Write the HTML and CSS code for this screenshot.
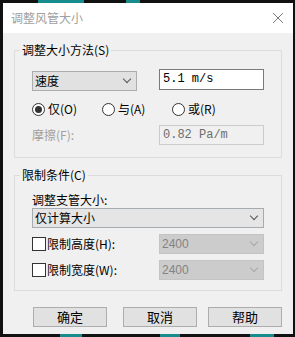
FILE: index.html
```html
<!DOCTYPE html>
<html lang="zh-CN">
<head>
  <meta charset="UTF-8" />
  <title>调整风管大小</title>
  <link rel="stylesheet" href="styles.css">
</head>
<body>

<div class="mark" style="left: 38px; top: 0; width: 46px;"></div>
<div class="mark" style="left: 126px; top: 0; width: 14px;"></div>
<div class="mark" style="left: 60px; top: 334px; width: 22px;"></div>
<div class="mark" style="left: 160px; top: 334px; width: 20px;"></div>
<div class="mark" style="left: 250px; top: 334px; width: 24px;"></div>

<div class="dialog">
  <div class="titlebar">
    <span class="title">调整风管大小</span>
    <svg class="close" width="12" height="12" viewBox="0 0 12 12">
      <path d="M1 1 L11 11 M11 1 L1 11" stroke="#7a7a7a" stroke-width="1" fill="none" />
    </svg>
  </div>

  <div class="content">
    <fieldset class="group">
      <legend>调整大小方法(S)</legend>

      <div class="row row-first">
        <div class="combo combo-small">
          <span>速度</span>
          <span class="chev"></span>
        </div>
        <div class="textbox">5.1 m/s</div>
      </div>

      <div class="radios">
        <label class="radio"><span class="dot checked"></span>仅(O)</label>
        <label class="radio"><span class="dot"></span>与(A)</label>
        <label class="radio"><span class="dot"></span>或(R)</label>
      </div>

      <div class="row row-friction">
        <span class="muted">摩擦(F):</span>
        <div class="textbox disabled">0.82 Pa/m</div>
      </div>
    </fieldset>

    <fieldset class="group group-limit">
      <legend>限制条件(C)</legend>

      <div class="caption">调整支管大小:</div>
      <div class="combo combo-wide">
        <span>仅计算大小</span>
        <span class="chev"></span>
      </div>

      <div class="row row-check">
        <label class="check"><span class="box"></span>限制高度(H):</label>
        <div class="combo combo-off">
          <span>2400</span>
          <span class="chev"></span>
        </div>
      </div>

      <div class="row row-check">
        <label class="check"><span class="box"></span>限制宽度(W):</label>
        <div class="combo combo-off">
          <span>2400</span>
          <span class="chev"></span>
        </div>
      </div>
    </fieldset>

    <div class="buttons">
      <button class="btn btn-ok">确定</button>
      <button class="btn btn-cancel">取消</button>
      <button class="btn btn-help">帮助</button>
    </div>
  </div>
</div>

</body>
</html>
```

FILE: styles.css
```css
body {
  margin: 0;
  padding: 3px 2px 3px 3px;
  background: #111;
  font-family: "Noto Sans CJK SC", "Liberation Sans", sans-serif;
  font-size: 12px;
  color: #000;
  position: relative;
  height: 331px;
}

/* bits of the drawing behind the dialog */
.mark {
  position: absolute;
  height: 3px;
  background: #178c8c;
}

.dialog {
  width: 290px;
  height: 331px;
  background: #f0f0f0;
  display: flex;
  flex-direction: column;
}

.titlebar {
  height: 30px;
  background: #fff;
  display: flex;
  align-items: center;
  justify-content: space-between;
  padding: 0 9px 0 8px;
}

.title {
  color: #a0a0a0;
  font-size: 12px;
  line-height: 16px;
}

.close {
  margin-top: -1px;
}

.content {
  padding: 0 11px;
}

.group {
  margin: 9px 0 0;
  padding: 0 17px 12px;
  border: 1px solid #dcdcdc;
  min-width: 0;
}

.group legend {
  margin-left: -12px;
  padding: 0 2px;
  line-height: 16px;
}

.group-limit {
  padding-bottom: 10px;
}

.row {
  display: flex;
  justify-content: space-between;
  align-items: center;
}

.row-first {
  margin-top: 11px;
  align-items: flex-start;
}

.combo {
  box-sizing: border-box;
  height: 20px;
  border: 1px solid #adadad;
  background: #e1e1e1;
  display: flex;
  align-items: center;
  justify-content: space-between;
  padding: 0 6px 0 2px;
  line-height: 16px;
}

.combo-small {
  width: 105px;
  margin-top: 2px;
}

.combo-wide {
  width: 232px;
  background: #e5e5e5;
  border-color: #a6abb0;
}

.combo-off {
  width: 105px;
  background: #cccccc;
  border-color: #c4c4c4;
  color: #838383;
  font-family: "Liberation Sans", sans-serif;
}

.chev {
  width: 5px;
  height: 5px;
  border-right: 1px solid #555;
  border-bottom: 1px solid #555;
  transform: rotate(45deg);
  margin-top: -4px;
}

.combo-off .chev {
  border-color: #a8a8a8;
}

.textbox {
  box-sizing: border-box;
  width: 105px;
  height: 21px;
  border: 1px solid #7a7a7a;
  background: #fff;
  padding: 0 3px;
  font-family: "Liberation Mono", monospace;
  font-size: 12px;
  line-height: 19px;
}

.textbox.disabled {
  height: 20px;
  line-height: 18px;
  background: #f0f0f0;
  border-color: #cccccc;
  color: #6d6d6d;
}

.radios {
  display: flex;
  margin-top: 10px;
  line-height: 16px;
}

.radio {
  width: 70px;
  display: flex;
  align-items: center;
  gap: 3px;
}

.dot {
  box-sizing: border-box;
  width: 13px;
  height: 13px;
  border: 1px solid #333;
  border-radius: 50%;
  background: #fff;
  display: flex;
  align-items: center;
  justify-content: center;
}

.dot.checked::after {
  content: "";
  width: 7px;
  height: 7px;
  border-radius: 50%;
  background: #333;
}

.row-friction {
  margin-top: 8px;
  line-height: 16px;
}

.muted {
  color: #a0a0a0;
}

.caption {
  margin-top: 9px;
  line-height: 16px;
}

.row-check {
  margin-top: 6px;
  line-height: 16px;
}

.check {
  display: flex;
  align-items: center;
  gap: 1px;
}

.box {
  box-sizing: border-box;
  width: 14px;
  height: 14px;
  border: 1px solid #333;
  background: #fff;
}

.buttons {
  display: flex;
  margin-top: 16px;
  padding-left: 19px;
}

.btn {
  width: 74px;
  height: 20px;
  padding: 0;
  border: 1px solid #adadad;
  background: #e1e1e1;
  font-family: "Noto Sans CJK SC", sans-serif;
  font-size: 13px;
  line-height: 16px;
  color: #000;
}

.btn-cancel {
  margin-left: 16px;
}

.btn-help {
  margin-left: 11px;
}
```
